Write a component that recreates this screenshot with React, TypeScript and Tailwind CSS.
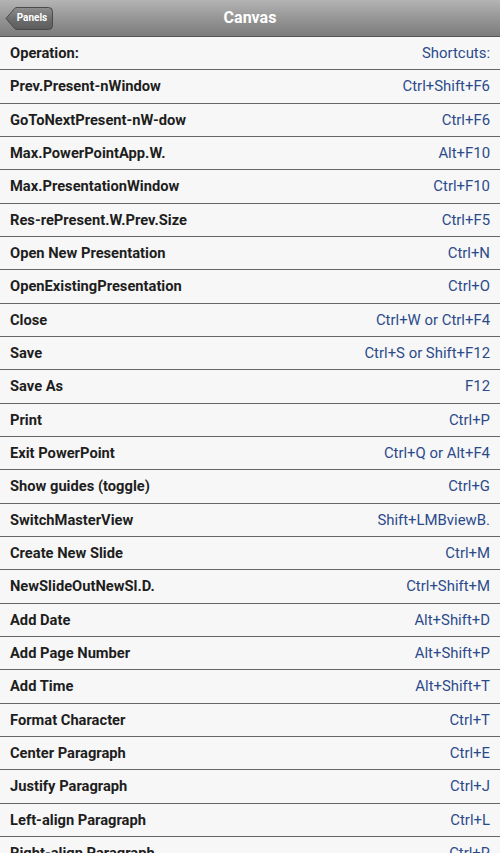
import React from 'react';

// Shortcut list for the "Canvas" panel
const rows: [string, string][] = [
  ['Operation:', 'Shortcuts:'],
  ['Prev.Present-nWindow', 'Ctrl+Shift+F6'],
  ['GoToNextPresent-nW-dow', 'Ctrl+F6'],
  ['Max.PowerPointApp.W.', 'Alt+F10'],
  ['Max.PresentationWindow', 'Ctrl+F10'],
  ['Res-rePresent.W.Prev.Size', 'Ctrl+F5'],
  ['Open New Presentation', 'Ctrl+N'],
  ['OpenExistingPresentation', 'Ctrl+O'],
  ['Close', 'Ctrl+W or Ctrl+F4'],
  ['Save', 'Ctrl+S or Shift+F12'],
  ['Save As', 'F12'],
  ['Print', 'Ctrl+P'],
  ['Exit PowerPoint', 'Ctrl+Q or Alt+F4'],
  ['Show guides (toggle)', 'Ctrl+G'],
  ['SwitchMasterView', 'Shift+LMBviewB.'],
  ['Create New Slide', 'Ctrl+M'],
  ['NewSlideOutNewSl.D.', 'Ctrl+Shift+M'],
  ['Add Date', 'Alt+Shift+D'],
  ['Add Page Number', 'Alt+Shift+P'],
  ['Add Time', 'Alt+Shift+T'],
  ['Format Character', 'Ctrl+T'],
  ['Center Paragraph', 'Ctrl+E'],
  ['Justify Paragraph', 'Ctrl+J'],
  ['Left-align Paragraph', 'Ctrl+L'],
  ['Right-align Paragraph', 'Ctrl+R'],
];

function BackButton() {
  return (
    <button className="relative h-[23px] w-[48px] flex items-center justify-center pl-[6px]">
      <svg className="absolute inset-0" width="48" height="23" viewBox="0 0 48 23">
        <defs>
          <linearGradient id="bb" x1="0" y1="0" x2="0" y2="1">
            <stop offset="0" stopColor="#8e8e8e" />
            <stop offset="0.5" stopColor="#6e6e6e" />
            <stop offset="1" stopColor="#5c5c5c" />
          </linearGradient>
        </defs>
        <path
          d="M1 11.5 L9.5 1.5 Q10.5 0.5 12 0.5 L43.5 0.5 Q47.5 0.5 47.5 4.5 L47.5 18.5 Q47.5 22.5 43.5 22.5 L12 22.5 Q10.5 22.5 9.5 21.5 Z"
          fill="url(#bb)"
          stroke="#4a4a4a"
          strokeWidth="1"
        />
      </svg>
      <span className="relative text-[10px] font-bold text-white leading-none">Panels</span>
    </button>
  );
}

export default function App() {
  return (
    <div className="h-screen w-full overflow-hidden bg-[#f7f7f7] font-['Roboto','Liberation_Sans',sans-serif]">
      {/* ── Header ── */}
      <div className="relative h-[37px] flex items-center px-[5px] bg-gradient-to-b from-[#b4b4b4] via-[#969696] to-[#7c7c7c] border-b border-[#555]">
        <BackButton />
        <div className="absolute left-1/2 top-[7px] -translate-x-1/2 text-white font-bold text-[16px] leading-[22px]">Canvas</div>
      </div>

      {/* ── Rows ── */}
      <div className="flex flex-col">
        {rows.map(([op, key]) => (
          <div
            key={op}
            className="h-[33.33px] shrink-0 flex items-center justify-between px-[10px] border-b border-[#666]"
          >
            <span className="text-[14.7px] font-bold text-[#1e1e1e]">{op}</span>
            <span className="text-[14.9px] text-[#2b4a8b]">{key}</span>
          </div>
        ))}
      </div>
    </div>
  );
}
